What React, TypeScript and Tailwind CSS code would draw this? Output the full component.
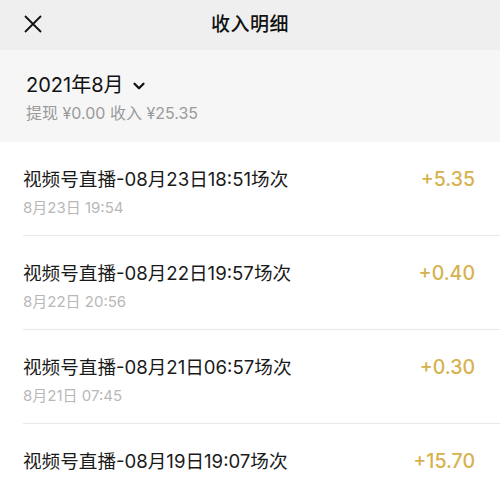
import { ChevronDown } from 'lucide-react';

const rows = [
  { title: '视频号直播-08月23日18:51场次', time: '8月23日 19:54', amount: '+5.35' },
  { title: '视频号直播-08月22日19:57场次', time: '8月22日 20:56', amount: '+0.40' },
  { title: '视频号直播-08月21日06:57场次', time: '8月21日 07:45', amount: '+0.30' },
  { title: '视频号直播-08月19日19:07场次', time: '8月19日 19:42', amount: '+15.70' },
];

export default function App() {
  return (
    <div
      className="w-[500px] h-[481px] overflow-hidden bg-white"
      style={{ fontFamily: 'Inter, "Noto Sans CJK SC", sans-serif' }}
    >
      <div className="relative h-[50px] bg-[#efefef] flex items-center justify-center">
        <button className="absolute left-[22px] top-[13px] text-[#111]">
          <svg width="22" height="22" viewBox="0 0 22 22" fill="none" stroke="currentColor" strokeWidth="1.8">
            <path d="M3 3 L19 19 M19 3 L3 19" />
          </svg>
        </button>
        <h1 className="text-[19px] font-medium text-[#111] tracking-[0.5px]">收入明细</h1>
      </div>

      <div className="h-[92px] bg-[#f6f6f6] px-[26px] pt-[21px]">
        <div className="flex items-center gap-[6px] text-[20px] leading-[28px] text-[#111]">
          <span>2021年8月</span>
          <ChevronDown size={18} strokeWidth={3} className="mt-[2px]" />
        </div>
        <div className="mt-[3px] text-[16px] leading-[22px] text-[#9a9a9a]">提现 ¥0.00 收入 ¥25.35</div>
      </div>

      <div className="pl-[23px]">
        {rows.map((r) => (
          <div key={r.title} className="flex h-[94px] border-b border-[#e8e8e8] pr-[25px]">
            <div className="flex-1 pt-[24px]">
              <div className="text-[18.6px] leading-[26px] text-[#1a1a1a]">{r.title}</div>
              <div className="mt-[5px] text-[15px] leading-[22px] text-[#b8b8b8]">{r.time}</div>
            </div>
            <div className="pt-[23px] text-[19.5px] leading-[28px] font-medium text-[#d6b24e]">{r.amount}</div>
          </div>
        ))}
      </div>
    </div>
  );
}
